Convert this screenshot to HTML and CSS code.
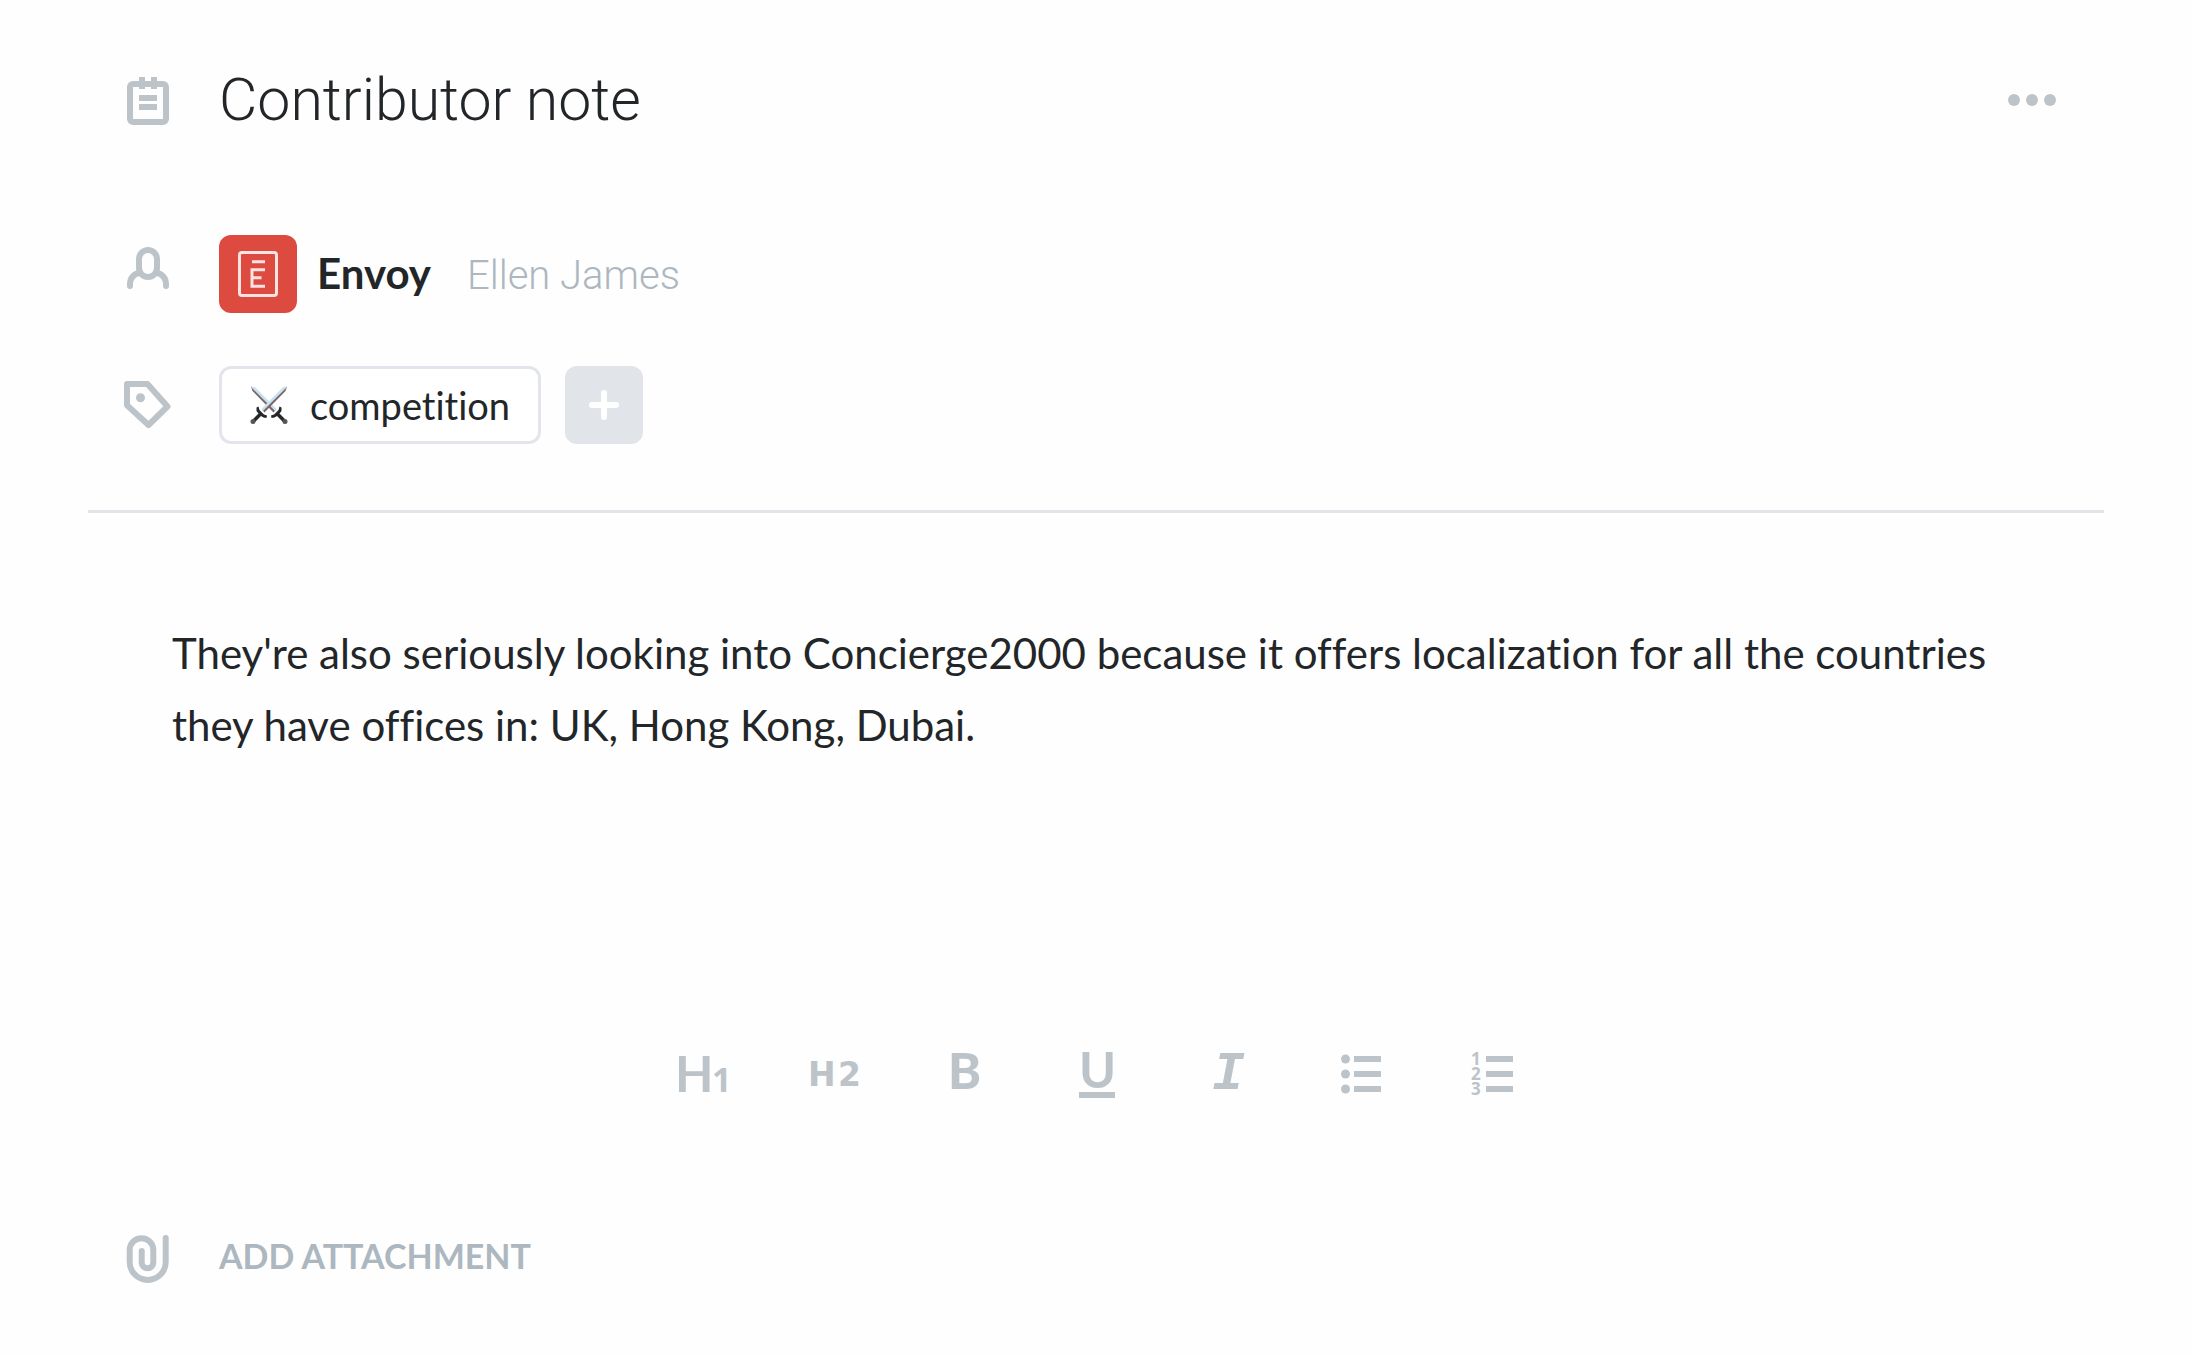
FILE: index.html
```
<!DOCTYPE html>
<html lang="en">
<head>
<meta charset="utf-8">
<meta name="viewport" content="width=device-width, initial-scale=1">
<title>Contributor note</title>
<link rel="stylesheet" href="styles.css">
</head>
<body>
<main class="note">
  <header class="row row-title">
    <svg class="row-icon" viewBox="0 0 48 56" aria-hidden="true">
      <rect class="line" x="6" y="12" width="36" height="38" rx="3"/>
      <path class="fill" d="M15 5h6v12h-6zM27 5h6v12h-6zM15 23h18v6H15zM15 32h18v6H15z"/>
    </svg>
    <h1 class="title">Contributor note</h1>
    <button class="more" type="button" aria-label="More options">
      <svg width="48" height="12" viewBox="0 0 48 12" aria-hidden="true"><g class="fill"><circle cx="6" cy="6" r="6"/><circle cx="24" cy="6" r="6"/><circle cx="42" cy="6" r="6"/></g></svg>
    </button>
  </header>

  <section class="meta">
    <div class="row">
      <svg class="row-icon" viewBox="0 0 48 56" aria-hidden="true">
        <rect class="line" x="15" y="4" width="18" height="27" rx="9"/>
        <path class="line" d="M6 40v-2c0-6 4-10.500 9.500-11M42 40v-2c0-6-4-10.500-9.500-11"/>
      </svg>
      <div class="owner">
        <svg class="avatar" viewBox="0 0 78 78" role="img" aria-label="Envoy logo">
          <g class="logo-line">
            <rect x="20.500" y="17.500" width="37" height="43" rx="2.500"/>
            <path d="M33 26.800h13M46 34.700H33v16.500h13M33 42.800h9.500"/>
          </g>
        </svg>
        <div class="names">
          <a class="company" href="#envoy">Envoy</a>
          <a class="person" href="#ellen-james">Ellen James</a>
        </div>
      </div>
    </div>

    <div class="row">
      <svg class="row-icon" viewBox="0 0 48 56" aria-hidden="true">
        <path class="line" d="M3 7h20.500L43.500 29.500 24.500 48 3 28.300z"/>
        <circle class="fill" cx="16.500" cy="20.700" r="4.500"/>
      </svg>
      <div class="tags">
        <button class="tag" type="button">
          <svg width="38" height="38" viewBox="0 0 38 38" aria-hidden="true">
            <g id="sword">
              <path d="M1 0.500 5 2 26 23.500 23.500 26.500 2.500 5z" fill="#7c6468"/>
              <path d="M1 0.500 5.500 1.500 26.500 23 24.800 24.800 2 2z" fill="#c9e2f2"/>
              <path d="m21 29.500 3-1 4.500-4.500 1-3.500 2 1v3.500l-2 2.500 6 6-2.500 2.500-6-6-2.500 1.500-3 .5z" fill="#24282b"/>
              <circle cx="35" cy="35.500" r="2.500" fill="#5b5357"/>
            </g>
            <use href="#sword" transform="matrix(-1 0 0 1 38 0)"/>
          </svg>
          <span>competition</span>
        </button>
        <button class="add-tag" type="button" aria-label="Add tag">
          <svg width="30" height="30" viewBox="0 0 30 30" aria-hidden="true"><path class="plus" d="M15 3v24M3 15h24"/></svg>
        </button>
      </div>
    </div>
  </section>

  <div class="body" contenteditable="true" spellcheck="false" role="textbox" aria-label="Note text">
    <p>They're also seriously looking into Concierge2000 because it offers localization for all the countries they have offices in: UK, Hong Kong, Dubai.</p>
  </div>

  <div class="toolbar" role="toolbar" aria-label="Formatting">
    <button type="button" aria-label="Heading 1"><svg viewBox="0 0 60 60"><text class="glyph" x="5" y="48">H</text><text class="digit" x="42" y="48">1</text></svg></button>
    <button type="button" aria-label="Heading 2"><svg viewBox="0 0 60 60"><text class="glyph-small" y="42"><tspan x="6">H</tspan><tspan x="36">2</tspan></text></svg></button>
    <button type="button" aria-label="Bold"><svg viewBox="0 0 60 60"><text class="glyph-heavy" x="14" y="45">B</text></svg></button>
    <button type="button" aria-label="Underline"><svg viewBox="0 0 60 60"><text class="glyph" x="13" y="44">U</text><path class="fill" d="M13 48h36v6H13z"/></svg></button>
    <button type="button" aria-label="Italic"><svg viewBox="0 0 60 60"><text class="glyph-italic" x="14" y="45">I</text></svg></button>
    <button type="button" aria-label="Bulleted list"><svg viewBox="0 0 60 60"><g class="fill"><circle cx="15.500" cy="15" r="4.500"/><circle cx="15.500" cy="30" r="4.500"/><circle cx="15.500" cy="45" r="4.500"/><path d="M24 12h27v6H24zM24 27h27v6H24zM24 42h27v6H24z"/></g></svg></button>
    <button type="button" aria-label="Numbered list"><svg viewBox="0 0 60 60"><text class="numeral"><tspan x="9" y="21">1</tspan><tspan x="9" y="36">2</tspan><tspan x="9" y="51">3</tspan></text><path class="fill" d="M24 12h27v6H24zM24 27h27v6H24zM24 42h27v6H24z"/></svg></button>
  </div>

  <footer class="footer">
    <button class="attach" type="button">
      <svg class="row-icon" viewBox="0 0 48 56" aria-hidden="true">
        <path class="line" d="M41.700 10v24a18 18 0 0 1-36 0V22a11.800 11.800 0 0 1 23.600 0v12.500a5.800 5.800 0 0 1-11.600 0V23"/>
      </svg>
      <span>ADD ATTACHMENT</span>
    </button>
  </footer>
</main>
</body>
</html>
```
FILE: styles.css
```
:root {
  --ink: #232629;
  --icon: #bcc4ca;
  --muted: #adb7bf;
  --soft: #e1e5ea;
}

* { box-sizing: border-box; }

body {
  margin: 0;
  background: #fefefe;
  color: var(--ink);
  font: 400 42px/72px Lato, "Open Sans", sans-serif;
  font-variant-ligatures: none;
}

button {
  margin: 0;
  padding: 0;
  border: 0;
  background: none;
  color: inherit;
  font: inherit;
  font-variant-ligatures: none;
  cursor: pointer;
}

a { color: inherit; text-decoration: none; }
svg { display: block; flex: none; }

.fill { fill: var(--icon); }
.line {
  fill: none;
  stroke: var(--icon);
  stroke-width: 6px;
  stroke-linecap: round;
  stroke-linejoin: round;
}

.note {
  display: flex;
  flex-direction: column;
  padding: 64px 88px;
}

.row {
  display: flex;
  align-items: center;
  gap: 47px;
  padding: 0 36px;
}
.row-icon { width: 48px; height: 56px; }

.title {
  flex: 1;
  margin: 0;
  font-family: Roboto, sans-serif;
  font-size: 59px;
  font-weight: 300;
}
.more {
  display: grid;
  place-items: center;
  width: 72px;
  height: 72px;
}

.meta {
  display: flex;
  flex-direction: column;
  gap: 53px;
  margin-top: 99px;
  padding-bottom: 66px;
  border-bottom: 3px solid var(--soft);
}

.owner { display: flex; align-items: center; gap: 20px; }
.avatar {
  width: 78px;
  height: 78px;
  border-radius: 12px;
  background: #dd4a40;
}
.logo-line {
  fill: none;
  stroke: #fbe3e1;
  stroke-width: 3px;
}
.names { display: flex; align-items: baseline; gap: 36px; }
.company { font-weight: 700; }
.person {
  color: var(--muted);
  font-family: Roboto, sans-serif;
  font-size: 40px;
  font-weight: 300;
}

.tags { display: flex; gap: 24px; }
.tag {
  display: flex;
  align-items: center;
  gap: 22px;
  height: 78px;
  padding: 0 28px;
  border: 3px solid #e3e5ed;
  border-radius: 12px;
  background: #fff;
  font-size: 38px;
}
.add-tag {
  display: grid;
  place-items: center;
  width: 78px;
  height: 78px;
  border-radius: 12px;
  background: var(--soft);
}
.plus {
  fill: none;
  stroke: #fff;
  stroke-width: 6px;
  stroke-linecap: round;
}

.body {
  min-height: 386px;
  padding: 104px 84px 0;
  outline: 0;
}
.body p { margin: 0; }

.toolbar {
  display: flex;
  justify-content: center;
  gap: 72px;
  margin-top: 145px;
}
.toolbar svg { width: 60px; height: 60px; overflow: visible; fill: var(--icon); }
.glyph { font-size: 50px; font-weight: 700; }
.glyph-heavy { font-size: 50px; font-weight: 900; }
.glyph-small { font: 700 33px "DejaVu Sans", sans-serif; }
.glyph-italic { font: italic 700 54px "Liberation Mono", monospace; }
.digit { font: 700 34px "Open Sans", sans-serif; }
.numeral { font: 700 17px "Open Sans", sans-serif; }

.footer { margin-top: 124px; padding: 0 36px; }
.attach {
  display: flex;
  align-items: center;
  gap: 47px;
  color: var(--muted);
  font-size: 34px;
  font-weight: 700;
  line-height: 56px;
}
```
